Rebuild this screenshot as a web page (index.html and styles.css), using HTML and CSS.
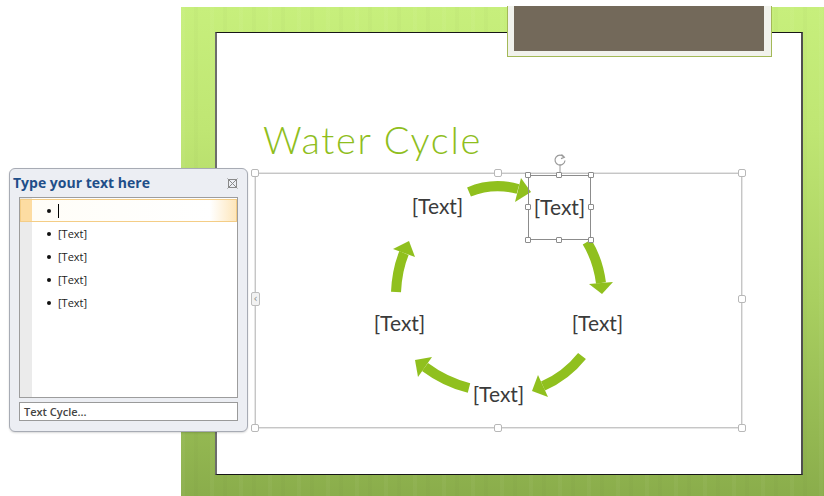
FILE: index.html
```html
<!DOCTYPE html>
<html lang="en">
<head>
  <meta charset="UTF-8" />
  <meta name="viewport" content="width=device-width, initial-scale=1.0"/>
  <title>Water Cycle</title>
  <link rel="stylesheet" href="styles.css">
</head>
<body>
  <div class="stage">
    <div class="slide">
      <div class="tab"><div class="tab-fill"></div></div>

      <div class="page">
        <h1 class="title">Water Cycle</h1>

        <div class="smartart">
          <svg class="arrows" width="485" height="253" viewBox="256 174 485 253">
            <g fill="none" stroke="#90c01e" stroke-width="10">
              <path d="M469 192 Q493 182 518 189"/>
              <path d="M587 242 Q598 260 601 283"/>
              <path d="M582 356 Q566 376 543 386"/>
              <path d="M469 388 Q445 382 425 367"/>
              <path d="M396 292 Q397 270 404 253"/>
            </g>
            <g fill="#90c01e">
              <polygon points="521,178 531,192 515,202"/>
              <polygon points="589,284 613,282 602,294"/>
              <polygon points="548,397 538,375 532,391"/>
              <polygon points="432,357 418,377 415,360"/>
              <polygon points="415,257 393,249 409,241"/>
            </g>
          </svg>

          <div class="node node-1">[Text]</div>
          <div class="node node-2 is-selected">
            [Text]
            <svg class="rotate" width="14" height="22" viewBox="0 0 14 22">
              <path d="M11 4 A5 5 0 1 0 12 7.5" fill="none" stroke="#9a9a9a" stroke-width="1.2"/>
              <path d="M8.5 1.5 L11.3 4.2 L8 5.6" fill="none" stroke="#9a9a9a" stroke-width="1.2"/>
              <line x1="7" y1="11" x2="7" y2="22" stroke="#9a9a9a" stroke-width="1"/>
            </svg>
            <span class="nh nh-tl"></span><span class="nh nh-tm"></span><span class="nh nh-tr"></span>
            <span class="nh nh-ml"></span><span class="nh nh-mr"></span>
            <span class="nh nh-bl"></span><span class="nh nh-bm"></span><span class="nh nh-br"></span>
          </div>
          <div class="node node-3">[Text]</div>
          <div class="node node-4">[Text]</div>
          <div class="node node-5">[Text]</div>

          <span class="handle h-tl"></span>
          <span class="handle h-tm"></span>
          <span class="handle h-tr"></span>
          <span class="handle h-mr"></span>
          <span class="handle h-bl"></span>
          <span class="handle h-bm"></span>
          <span class="handle h-br"></span>
          <span class="pane-toggle">&lsaquo;</span>
        </div>
      </div>
    </div>
  </div>

  <aside class="text-pane">
    <div class="pane-head">
      <span class="pane-title">Type your text here</span>
      <svg class="pane-close" width="11" height="11" viewBox="0 0 11 11">
        <rect x="1.5" y="1.5" width="8" height="8" fill="none" stroke="#8a8a8a"/>
        <path d="M0.5 0.5 L10.5 10.5 M10.5 0.5 L0.5 10.5" stroke="#8a8a8a" stroke-width="1"/>
      </svg>
    </div>
    <ul class="pane-list">
      <li class="pane-row is-active"><span class="caret"></span></li>
      <li class="pane-row">[Text]</li>
      <li class="pane-row">[Text]</li>
      <li class="pane-row">[Text]</li>
      <li class="pane-row">[Text]</li>
    </ul>
    <div class="pane-foot">Text Cycle...</div>
  </aside>
</body>
</html>
```

FILE: styles.css
```css
* {
  box-sizing: border-box;
}

body {
  margin: 0;
  width: 824px;
  height: 496px;
  overflow: hidden;
  position: relative;
  background: #fff;
  font-family: "Lato", "Liberation Sans", sans-serif;
}

.stage {
  padding: 7px 0 0 181px;
}

.slide {
  position: relative;
  width: 643px;
  height: 489px;
  padding: 25px 0 0 34px;
  background:
    repeating-linear-gradient(90deg, rgba(255, 255, 255, 0.035) 0 4px, rgba(255, 255, 255, 0) 4px 13px, rgba(0, 0, 0, 0.015) 13px 17px, rgba(0, 0, 0, 0) 17px 29px),
    linear-gradient(180deg, #c7ef7c 0%, #bfe673 25%, #a9cf60 60%, #8aad4b 100%);
}

.tab {
  position: absolute;
  left: 326px;
  top: -1px;
  width: 265px;
  height: 51px;
  padding: 0 7px 5px 6px;
  background: #f1f2ec;
  border: 1px solid #a3b957;
  border-top: none;
}

.tab-fill {
  height: 100%;
  background: #73695a;
}

.page {
  width: 588px;
  height: 443px;
  padding: 83px 0 0 38px;
  background: #fff;
  border-top: 1px solid #161616;
  border-bottom: 1px solid #161616;
  border-left: 2px solid #6d6d6d;
  border-right: 2px solid #505050;
}

.title {
  margin: 0 0 0 8px;
  font-size: 38px;
  line-height: 46px;
  font-weight: 300;
  letter-spacing: 1.7px;
  color: #8fbe1d;
}

/* smartart frame */
.smartart {
  position: relative;
  margin-top: 11px;
  width: 487px;
  height: 255px;
  border: 1px solid #c6c6c6;
  box-shadow: inset 0 0 0 1px #fff, 0 0 0 1px #e6e6e6;
}

.arrows {
  position: absolute;
  left: 0;
  top: 0;
}

.node {
  position: absolute;
  width: 63px;
  height: 65px;
  display: flex;
  align-items: center;
  justify-content: center;
  padding-bottom: 3px;
  font-size: 21px;
  color: #3b3b3b;
}

.node-1 { left: 150px; top: 0; }
.node-2 { left: 272px; top: 1px; }
.node-3 { left: 310px; top: 117px; }
.node-4 { left: 211px; top: 188px; }
.node-5 { left: 112px; top: 117px; }

.node.is-selected {
  border: 1px solid #8c8c8c;
}

.rotate {
  position: absolute;
  left: 24px;
  top: -23px;
}

.nh {
  position: absolute;
  width: 6px;
  height: 6px;
  background: #fff;
  border: 1px solid #8c8c8c;
  border-radius: 1px;
}

.nh-tl { left: -4px; top: -4px; }
.nh-tm { left: 27px; top: -4px; }
.nh-tr { right: -4px; top: -4px; }
.nh-ml { left: -4px; top: 28px; }
.nh-mr { right: -4px; top: 28px; }
.nh-bl { left: -4px; bottom: -4px; }
.nh-bm { left: 27px; bottom: -4px; }
.nh-br { right: -4px; bottom: -4px; }

.handle {
  position: absolute;
  width: 8px;
  height: 8px;
  background: #fff;
  border: 1px solid #b8b8b8;
  border-radius: 2px;
}

.h-tl { left: -5px; top: -5px; }
.h-tm { left: 238px; top: -5px; }
.h-tr { right: -5px; top: -5px; }
.h-mr { right: -5px; top: 121px; }
.h-bl { left: -5px; bottom: -5px; }
.h-bm { left: 238px; bottom: -5px; }
.h-br { right: -5px; bottom: -5px; }

.pane-toggle {
  position: absolute;
  left: -5px;
  top: 118px;
  width: 9px;
  height: 14px;
  background: #f2f2f2;
  border: 1px solid #bdbdbd;
  border-radius: 2px;
  font-family: "DejaVu Sans", sans-serif;
  font-size: 10px;
  line-height: 11px;
  text-align: center;
  color: #888;
}

/* text pane */
.text-pane {
  position: absolute;
  left: 9px;
  top: 168px;
  width: 239px;
  height: 264px;
  display: flex;
  flex-direction: column;
  background: #eceef3;
  border: 1px solid #a7abb4;
  border-radius: 6px;
  box-shadow: 0 1px 2px rgba(0, 0, 0, 0.15);
  font-family: "Open Sans", "Liberation Sans", sans-serif;
}

.pane-head {
  height: 28px;
  display: flex;
  justify-content: space-between;
  align-items: flex-start;
  padding: 5px 9px 0 3px;
}

.pane-title {
  font-size: 14px;
  line-height: 18px;
  font-weight: 700;
  color: #1f4e89;
}

.pane-close {
  margin-top: 4px;
}

.pane-list {
  list-style: none;
  margin: 0 9px;
  padding: 1px 0 0;
  height: 201px;
  border: 1px solid #9d9d9d;
  background: linear-gradient(90deg, #ebebeb 12px, #fff 12px);
}

.pane-row {
  display: flex;
  align-items: center;
  height: 23px;
  padding-left: 26px;
  border: 1px solid transparent;
  font-size: 11px;
  color: #1c1c1c;
}

.pane-row::before {
  content: "";
  width: 4px;
  height: 4px;
  margin-right: 7px;
  border-radius: 50%;
  background: #111;
}

.pane-row.is-active {
  border-color: #f4cd86;
  background: linear-gradient(90deg, #fddca2 0 11px, #fffdf7 11px, #fff 88%, #fde6bb 100%);
}

.caret {
  width: 1px;
  height: 14px;
  background: #000;
}

.pane-foot {
  margin: 4px 9px 0;
  height: 19px;
  padding-left: 4px;
  background: #fff;
  border: 1px solid #9a9a9a;
  font-size: 11px;
  line-height: 17px;
  font-weight: 600;
  color: #444;
}
```
